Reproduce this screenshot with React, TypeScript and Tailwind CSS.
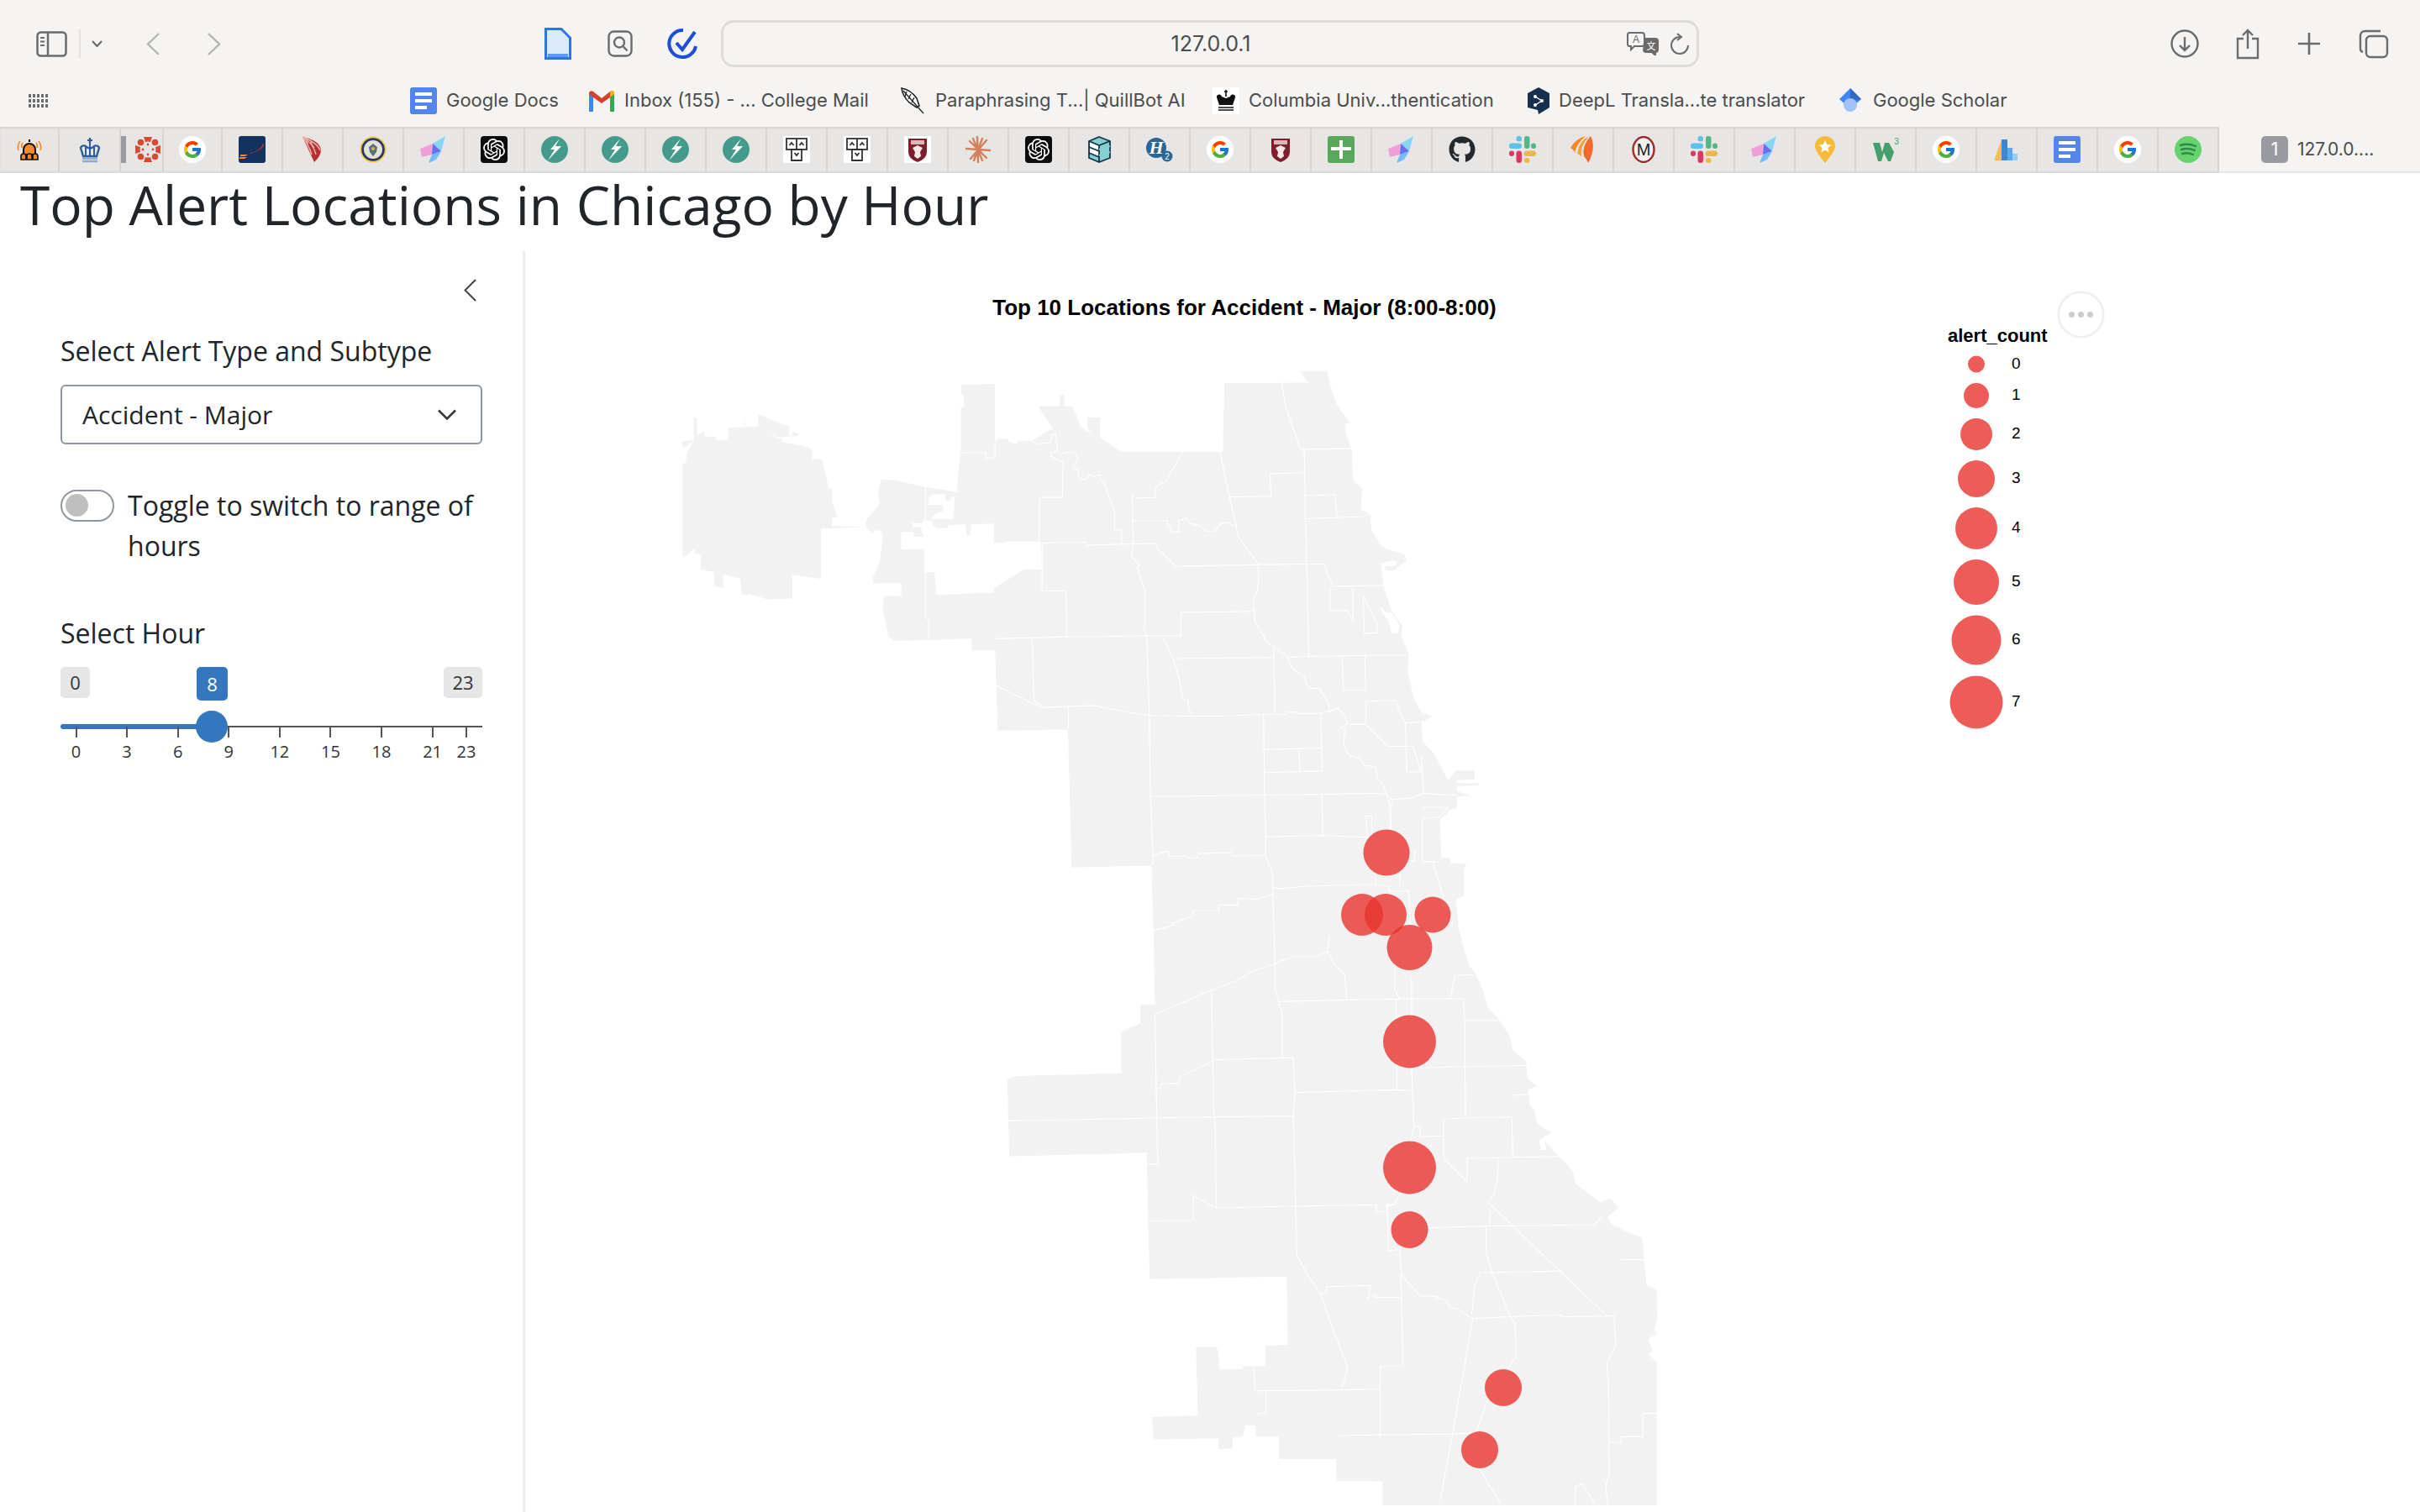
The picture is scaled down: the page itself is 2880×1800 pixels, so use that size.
import React from 'react';
import { FcGoogle } from 'react-icons/fc';
import { FaGithub } from 'react-icons/fa';
import { SiOpenai } from 'react-icons/si';

// ---------- favicons (all 32x32) ----------
const Ico = ({ children }: { children: React.ReactNode }) => (
  <svg viewBox="0 0 32 32" className="w-[32px] h-[32px] shrink-0">{children}</svg>
);

const Bell = () => (
  <Ico>
    <path d="M16 4v3M9 22v-6a7 7 0 0 1 14 0v6z" fill="#f58a2a" stroke="#111" strokeWidth="2" />
    <path d="M6 24a3 3 0 0 1 6 0v4H6zM13 24a3 3 0 0 1 6 0v4h-6zM20 24a3 3 0 0 1 6 0v4h-6z" fill="#f58a2a" stroke="#111" strokeWidth="1.6" />
    <path d="M5 6Q1 11 3 17M27 6q4 5 2 11M8 8q-2 3-1 6M24 8q2 3 1 6" fill="none" stroke="#f58a2a" strokeWidth="1.8" />
  </Ico>
);
const Crown = () => (
  <Ico>
    <path d="M16 2v7M13 5h6" stroke="#2f5d9b" strokeWidth="2.2" />
    <path d="M8 24 5 14a4 4 0 0 1 7-1l4 2 4-2a4 4 0 0 1 7 1l-3 10z" fill="none" stroke="#2f5d9b" strokeWidth="2.4" />
    <path d="M16 9v15M11 13v10M21 13v10" stroke="#2f5d9b" strokeWidth="2" />
    <path d="M7 26.500h18M7 30h18" stroke="#8ea9cc" strokeWidth="2.400" />
  </Ico>
);
const Canvas = () => (
  <Ico>
    <g fill="#d64a36">
      <path d="M11 1h10l-2 6q-3-1-6 0zM11 31h10l-2-6q-3 1-6 0z" />
      <path d="M1 11v10l6-2q-1-3 0-6zM31 11v10l-6-2q1-3 0-6z" />
      <circle cx="7.500" cy="7.500" r="3.800" /><circle cx="24.500" cy="7.500" r="3.800" /><circle cx="7.500" cy="24.500" r="3.800" /><circle cx="24.500" cy="24.500" r="3.800" />
      <circle cx="16" cy="10" r="1.400" /><circle cx="16" cy="22" r="1.400" /><circle cx="10" cy="16" r="1.400" /><circle cx="22" cy="16" r="1.400" />
    </g>
  </Ico>
);
const CanvasTab = () => (
  <div className="w-full h-full flex items-center">
    <span className="w-[6px] h-[32px] bg-[#9a9aa2] shrink-0" />
    <span className="ml-[10px]"><Canvas /></span>
  </div>
);
const Google = () => (
  <span className="w-[32px] h-[32px] rounded-full bg-white flex items-center justify-center shrink-0">
    <FcGoogle className="w-[24px] h-[24px]" />
  </span>
);
const Navy = () => (
  <Ico>
    <rect width="32" height="32" rx="3" fill="#14315f" />
    <path d="M30 8Q26 18 11 21Q22 20 30 12z" fill="#c9302c" />
    <path d="M2 22h9l-3 2H2zM1 25h9l-3 2H1z" fill="#ea8a2c" />
  </Ico>
);
const RedLeaf = () => (
  <Ico>
    <rect x="2" width="28" height="32" fill="#e9e4e2" />
    <path d="M4 1Q24 5 26 16Q26 24 18 31Q12 18 4 1z" fill="#b3312f" />
    <path d="M4 1Q12 12 15 22M4 1Q17 9 20 22M4 1Q22 8 25 17M9 5Q10 12 14 18M14 6Q14 10 18 14" fill="none" stroke="#e8b3ae" strokeWidth="1.400" />
  </Ico>
);
const Seal = () => (
  <Ico>
    <circle cx="16" cy="16" r="15.500" fill="#f0c843" />
    <circle cx="16" cy="16" r="13.800" fill="#27386a" />
    <circle cx="16" cy="16" r="11" fill="#e4e2d4" />
    <path d="M16 9l5 4-1 6-4 5-4-5-1-6z" fill="#5c6f85" />
    <circle cx="16" cy="15" r="2" fill="#d8b547" />
  </Ico>
);
const Prism = () => (
  <Ico>
    <path d="M30 0 15 9l10 9z" fill="#86d6fb" />
    <path d="M0 15 15 9l-1 13-12 3z" fill="#f09fd8" />
    <path d="M25 18 14 22 10 32l9-4z" fill="#75bcfb" />
    <path d="M15 9l10 9-11 4z" fill="#6a6cf0" />
  </Ico>
);
const Openai = () => (
  <span className="w-[32px] h-[32px] rounded-[4px] bg-[#0d0d0d] flex items-center justify-center shrink-0">
    <SiOpenai className="w-[26px] h-[26px] text-white" />
  </span>
);
const Bolt = () => (
  <Ico>
    <circle cx="16" cy="16" r="16" fill="#459a8c" />
    <path d="M22 3 11 16h5L8 29l16-17h-7l5-9z" fill="#fff" />
  </Ico>
);
const Cols = () => (
  <Ico>
    <rect width="32" height="32" fill="#fff" />
    <g fill="none" stroke="#333" strokeWidth="1.800">
      <rect x="4" y="3" width="24" height="13" />
      <path d="M16 3v13M10 16h12v13H10z" />
      <path d="M7.500 11l2.500-3 2.500 3M19.500 11l2.500-3 2.500 3M13.500 20l2.500 3 2.500-3" />
    </g>
  </Ico>
);
const Shield = ({ white = false }: { white?: boolean }) => (
  <Ico>
    {white && <rect width="32" height="32" fill="#fff" />}
    <path d="M5 3h22v16q0 8-11 12Q5 27 5 19z" fill="#7f1d2d" />
    <rect x="8" y="5" width="16" height="5" fill="#d9b8b8" />
    <path d="M16 11l6 3-3 5 1 5-4 3-4-3 1-5-3-5z" fill="#f3e8e8" />
  </Ico>
);
const Star = () => (
  <Ico>
    <g stroke="#d67f5d" strokeWidth="2.400" strokeLinecap="round">
      <path d="M15 1l1 30M2 15l28 2M6 6l20 20M26 5 7 27M10 3l11 26M21 3 11 29" />
    </g>
  </Ico>
);
const Stack = () => (
  <Ico>
    <path d="M16 1 29 6v20l-13 5L4 26V6z" fill="#85cfd0" stroke="#153349" strokeWidth="1.800" />
    <path d="M5 7l11 4v6L5 13zM5 14l11 4v6L5 20z" fill="#fff" />
    <path d="M4 6l12 5 13-5M4 13l12 5M4 20l12 5M16 11v20" fill="none" stroke="#153349" strokeWidth="1.800" />
    <path d="M16 16l13-4M16 23l13-4" stroke="#85cfd0" strokeWidth="2" />
  </Ico>
);
const H2 = () => (
  <Ico>
    <circle cx="12" cy="14" r="12" fill="#2a6595" />
    <text x="12" y="21" textAnchor="middle" fontFamily="Liberation Serif, serif" fontStyle="italic" fontWeight="700" fontSize="22" fill="#fff">H</text>
    <circle cx="25" cy="24" r="6.500" fill="#2a6595" />
    <text x="25" y="28" textAnchor="middle" fontFamily="Liberation Sans, sans-serif" fontSize="10" fill="#fff">2</text>
  </Ico>
);
const Cross = () => (
  <Ico>
    <rect width="32" height="32" rx="3" fill="#5aa85c" />
    <path d="M4 13h24v4H4zM14 5h4v22h-4z" fill="#fff" />
  </Ico>
);
const Github = () => <FaGithub className="w-[32px] h-[32px] text-[#24292f] shrink-0" />;
const Slack = () => (
  <Ico>
    <rect x="18" y="0" width="6.500" height="15" rx="3.200" fill="#53b787" />
    <rect x="26" y="8.500" width="6" height="6.500" rx="3" fill="#53b787" />
    <rect x="0" y="8.500" width="15" height="6.500" rx="3.200" fill="#5fc1ea" />
    <rect x="8.500" y="0" width="6.500" height="6.500" rx="3.200" fill="#5fc1ea" />
    <rect x="8.500" y="17.500" width="6.500" height="14.500" rx="3.200" fill="#d9385f" />
    <rect x="0" y="17.500" width="6" height="6.500" rx="3" fill="#d9385f" />
    <rect x="17.500" y="17.500" width="14.500" height="6.500" rx="3.200" fill="#e9b84a" />
    <rect x="18" y="26" width="6.500" height="6" rx="3" fill="#e9b84a" />
  </Ico>
);
const Wings = () => (
  <Ico>
    <path d="M19 0Q7 3 1 14q4 2 5 6Q9 8 19 0z" fill="#f28a32" />
    <path d="M23 0Q11 6 9 21q4 1 5 5Q12 12 23 0z" fill="#f4a23e" />
    <path d="M25 0Q14 12 17 24q3 3 5 8Q32 14 25 0z" fill="#f26a2a" />
  </Ico>
);
const MIcon = () => (
  <Ico>
    <ellipse cx="16" cy="16" rx="12.500" ry="15" fill="#f4f2f0" stroke="#9c2b26" strokeWidth="2.400" />
    <text x="16" y="23" textAnchor="middle" fontFamily="Liberation Sans, sans-serif" fontSize="20" fill="#222">M</text>
  </Ico>
);
const Pin = () => (
  <Ico>
    <path d="M16 32Q4 18 4 12a12 12 0 0 1 24 0q0 6-12 20z" fill="#f6bb3a" />
    <path d="M16 5l2.200 5 5.300.500-4 3.500 1.200 5.200L16 16.500 11.300 19.200l1.200-5.200-4-3.500 5.300-.5z" fill="#fff" />
  </Ico>
);
const W3 = () => (
  <Ico>
    <path d="M1 8h8l3 11 3-11h5l6 11-4 11h-3l-5-10-3 10h-4z" fill="#46a06e" />
    <text x="29" y="10" textAnchor="middle" fontFamily="Liberation Sans, sans-serif" fontSize="10" fill="#46a06e">3</text>
  </Ico>
);
const Analytics = () => (
  <Ico>
    <path d="M10 4v25H1z" fill="#f4c14e" />
    <rect x="10" y="4" width="7" height="25" fill="#3f86cc" />
    <rect x="17" y="14" width="6" height="15" fill="#5aaaf0" />
    <rect x="23" y="21" width="6" height="8" fill="#8fd0fb" />
  </Ico>
);
const Docs = () => (
  <Ico>
    <rect width="32" height="32" rx="3" fill="#5585ea" />
    <path d="M6 6h20v4H6zM6 14h20v4H6zM6 22h14v4H6z" fill="#fff" />
  </Ico>
);
const Spotify = () => (
  <Ico>
    <circle cx="16" cy="16" r="16" fill="#67d36f" />
    <path d="M7 11q9-3 18 1M8 16q8-2.500 16 1M9 21q7-2 13 1" fill="none" stroke="#2f8a4a" strokeWidth="2.400" strokeLinecap="round" />
  </Ico>
);
const Quill = () => (
  <svg viewBox="0 0 32 32" className="w-[32px] h-[32px] shrink-0">
    <path d="M3 1Q14 3 21 13l3 9-3 2-9-6Q4 10 3 1z" fill="#fff" stroke="#222" strokeWidth="1.600" />
    <path d="M5 4l16 18 8 9M9 5l-2 6M14 8l-3 6M18 12l-3 6" fill="none" stroke="#222" strokeWidth="1.300" />
  </svg>
);
const Gmail = () => (
  <svg viewBox="0 0 32 32" className="w-[32px] h-[32px] shrink-0">
    <path d="M1 29V6l5 3v20z" fill="#4285f4" />
    <path d="M26 29V9l5-3v23z" fill="#34a853" />
    <path d="M1 6q2-3 5-1l10 8L26 5q3-2 5 1v2l-5 4-10 7-10-7-5-4z" fill="#d6402f" />
    <path d="M26 5q3-2 5 1v2l-5 4z" fill="#f4b400" />
  </svg>
);
const ColCrown = () => (
  <svg viewBox="0 0 32 32" className="w-[32px] h-[32px] shrink-0">
    <rect width="32" height="32" fill="#fff" />
    <path d="M16 3v8M14 5h4" stroke="#111" strokeWidth="1.600" />
    <path d="M8 21 5 12a3 3 0 0 1 6-1l5 2 5-2a3 3 0 0 1 6 1l-3 9z" fill="#111" />
    <path d="M7 24h18M7 27h18" stroke="#111" strokeWidth="1.600" />
  </svg>
);
const Deepl = () => (
  <svg viewBox="3 0 26 32" className="w-[26px] h-[32px] shrink-0">
    <path d="M16 0 29 7v17l-13 8-1-5-12-3V7z" fill="#17304d" />
    <circle cx="12" cy="11" r="2" fill="#fff" /><circle cx="12" cy="21" r="2" fill="#fff" /><circle cx="20" cy="16" r="2" fill="#fff" />
    <path d="M12 11l8 5-8 5" fill="none" stroke="#fff" strokeWidth="1.400" />
  </svg>
);
const Scholar = () => (
  <svg viewBox="0 0 32 32" className="w-[32px] h-[32px] shrink-0">
    <path d="M16 1 29 14 16 26 3 14z" fill="#4285f4" />
    <path d="M16 1 29 14l-13 4z" fill="#356ac3" />
    <circle cx="16" cy="21" r="8" fill="#a0c3ff" />
  </svg>
);

// width of each tab, in order, with its favicon
const tabs: [number, React.ReactNode][] = [
  [71, <Bell />], [73, <Crown />], [51, <CanvasTab />], [70, <Google />], [72, <Navy />], [72, <RedLeaf />], [72, <Seal />],
  [72, <Prism />], [72, <Openai />], [72, <Bolt />], [72, <Bolt />], [72, <Bolt />], [72, <Bolt />], [72, <Cols />],
  [72, <Cols />], [72, <Shield white />], [72, <Star />], [72, <Openai />], [72, <Stack />], [72, <H2 />], [72, <Google />],
  [72, <Shield />], [72, <Cross />], [72, <Prism />], [72, <Github />], [72, <Slack />], [72, <Wings />], [72, <MIcon />],
  [72, <Slack />], [72, <Prism />], [72, <Pin />], [72, <W3 />], [72, <Google />], [72, <Analytics />], [72, <Docs />],
  [72, <Google />], [72, <Spotify />],
];

const bookmarks: [number, React.ReactNode, string][] = [
  [212, <Docs />, 'Google Docs'],
  [370, <Gmail />, 'Inbox (155) - ... College Mail'],
  [373, <Quill />, 'Paraphrasing T...| QuillBot AI'],
  [375, <ColCrown />, 'Columbia Univ...thentication'],
  [368, <Deepl />, 'DeepL Transla...te translator'],
  [240, <Scholar />, 'Google Scholar'],
];

// ---------- map, traced points ----------
const topOutline =
  'M82,298 82,278 103,276 103,216 109,216 109,262 122,252 124,266 145,266 145,276 167,276 167,243 197,241 197,212 199,240 223,240 223,208 240,216 272,236 281,238 281,262 287,262 288,252 298,258 298,264 262,268 240,252 260,270 267,272 267,280 310,292 324,300 324,326 342,326 355,405 361,406 361,440 371,480 361,482 361,504 425,507 424,490 450,445 447,415 452,380 475,382 535,400 593,414 598,340 601,310 601,190 607,187 607,153 602,153 602,128 665,125 665,278 672,272 688,272 690,278 697,284 706,284 708,278 733,278 773,244 745,185 786,185 786,155 794,155 794,185 810,185 825,240 846,258 838,246 838,214 861,215 861,268 900,307 1090,307 1093,124 1250,122 1234,92 1285,92 1290,125 1302,180 1327,230 1318,232 1320,260 1331,300 1332,380 1350,405 1348,460 1366,475 1367,515 1385,555 1398,568 1428,578 1434,597 1420,610 1410,624 1395,622 1392,612 1412,610 1416,600 1410,596 1385,605 1390,665 1405,730 1425,770 1423,800 1437,845 1435,890 1440,925 1448,970 1460,1000 1480,1012 1461,1030 1463,1080 1485,1112 1510,1182 1525,1157 1560,1157 1560,1180 1527,1182 1527,1190 1568,1190 1568,1197 1528,1198 1527,1212 1555,1224 1527,1226 1527,1257 1512,1262 1510,1270 1495,1288 1498,1390 1513,1390 1515,1403 1545,1405 1540,1420 1540,1490 1525,1500 1530,1570 960,1570 957,1410 808,1415 801,1048 670,1050 665,835 622,836 622,805 478,811 466,798 455,720 458,692 490,690 490,656 438,658 437,640 450,600 456,530 450,515 440,518 435,525 425,507 340,512 340,645 287,635 287,698 240,700 205,685 203,690 192,688 190,645 158,633 158,670 141,664 141,628 116,620 116,580 105,578 105,562 88,585 82,585 82,340 88,335 90,310 103,278 Z M541,430 548,420 572,420 572,436 582,436 583,427 590,427 587,486 548,486 548,477 560,470 568,465 568,448 540,448 Z M511,497 530,497 530,490 547,490 550,503 556,510 577,510 577,503 610,500 612,530 619,530 620,500 663,498 663,550 683,549 686,546 750,546 752,620 720,620 663,670 663,682 555,688 552,627 533,627 533,566 490,566 490,520 513,520 513,533 533,533 528,520 528,507 511,507 Z M1385,720 1395,735 1405,735 1420,770 1417,790 1405,790 1400,760 1385,730 Z';

const topLines = [
  '535,400 535,490',
  '601,310 648,308 650,323 665,323 665,278',
  '733,278 745,285 768,282 772,260 778,258 782,305 770,308 770,318 792,335 791,428 748,428 747,546',
  '782,305 790,312 800,308 815,310 820,325 812,342 812,352 822,358 820,372 828,380 835,380 840,368 850,372 860,368 863,385 868,388 888,465 888,515 901,515 901,553',
  '1015,308 990,368 985,385 964,400 964,428 928,430 921,420 922,490 923,550 920,585 935,610 930,615 945,680 945,765 942,775 948,795 953,1010 955,1225 958,1320 960,1390 958,1410',
  '748,550 835,548 838,556 901,553 965,551 968,565 1002,612 1155,608 1245,606 1280,606 1287,640 1297,665 1390,663',
  '922,490 987,490 988,505 993,507 993,520 1008,520 1008,490 1020,484 1030,497 1045,503 1060,518 1075,518 1085,500 1097,495 1115,505',
  '1085,307 1102,425 1115,505 1118,530 1155,605 1157,640 1155,675 1147,700 1150,760 1165,795 1172,815 1185,825 1187,1005',
  '1102,427 1180,425 1178,365 1243,362',
  '1200,122 1208,190 1234,298 1242,300 1243,362 1244,485 1247,606 1250,852',
  '1234,300 1331,298',
  '1244,423 1300,421 1303,482',
  '1244,485 1350,480 1366,473',
  '753,550 753,678 797,678 799,800',
  '663,805 800,800 948,797 1012,797 1012,735 1147,732',
  '535,627 535,750 541,752 541,808',
  '734,803 738,970 755,988 850,983 900,998 953,1010 1070,1012 1165,1007 1207,1007 1209,1001 1230,1001 1232,1005 1275,1004 1295,995',
  '667,930 750,988',
  '802,985 802,1048',
  '978,800 997,858 1185,855',
  '997,858 1010,918 1015,965 1025,970 1027,995 1035,1010',
  '1185,825 1197,842 1205,845 1210,855 1250,852 1435,848',
  '1210,855 1220,885 1243,905 1245,925 1255,938 1270,938 1285,970 1290,1000 1305,990 1318,1010 1322,1033 1357,1033 1357,972 1412,970 1430,1030 1465,1025',
  '1313,852 1315,942 1357,942 1355,850',
  '1322,1033 1310,1042 1318,1050 1315,1085 1325,1115 1345,1125 1355,1143 1375,1147 1378,1175 1390,1195 1400,1240 1405,1320',
  '1357,1033 1398,1092 1445,1092 1460,1160 1433,1160 1431,1030',
  '1166,1007 1168,1222 1170,1330 1170,1385 1183,1430 1185,1568',
  '1273,1004 1275,1158 1168,1162',
  '1168,1100 1275,1097',
  '1232,1098 1234,1160',
  '955,1226 1168,1222 1185,1222 1360,1218 1380,1218 1398,1222 1405,1235 1420,1232 1445,1230 1460,1218 1527,1222',
  '1460,1118 1465,1220',
  '1275,1222 1277,1330',
  '1170,1333 1277,1330 1360,1335 1357,1278 1368,1278 1368,1330',
  '1405,1240 1402,1320 1420,1395 1448,1398 1448,1370',
  '1462,1255 1510,1255 1495,1280 1462,1285 1462,1400 1495,1400',
  '958,1385 988,1370 990,1385 1020,1385 1025,1390 1042,1390 1045,1378 1105,1375 1108,1385 1170,1383',
  '1185,1468 1195,1472 1245,1465 1375,1460 1400,1465 1400,1478 1437,1478 1440,1568',
  '1375,1440 1375,1460',
  '1420,1395 1420,1465',
  '1482,1400 1505,1510 1520,1568',
  '1185,1485 1155,1500 1120,1498 1118,1515 1083,1515 1082,1530 1035,1530 1033,1545 990,1568',
  '1290,668 1290,730 1322,730 1333,755 1332,668',
  '1352,690 1378,768 1377,790 1354,790 1352,690',
];

const bottomOutline =
  'M475,-2 1105,-2 1110,20 1120,70 1130,110 1140,125 1160,180 1168,220 1190,250 1215,300 1220,335 1248,365 1250,410 1270,430 1252,440 1255,480 1265,495 1270,530 1300,555 1285,565 1275,575 1278,600 1290,600 1285,575 1310,610 1330,635 1345,660 1350,690 1400,740 1422,730 1440,755 1415,780 1425,800 1488,835 1497,960 1518,972 1520,1040 1513,1085 1520,1090 1500,1105 1510,1135 1500,1145 1518,1165 1518,1548 950,1548 950,1484 855,1483 853,1425 735,1425 735,1365 687,1365 687,1335 666,1335 660,1365 640,1367 638,1398 610,1398 610,1370 475,1372 472,1313 567,1308 563,1125 605,1125 610,1140 612,1185 660,1185 660,1177 707,1177 707,1122 754,1120 751,938 467,945 461,608 176,617 172,413 190,403 409,396 408,285 448,263 448,212 478,212 Z';

const bottomLines = [
  '725,0 727,170 735,205 875,200 1010,197 1118,197',
  '840,30 835,70 850,105 872,135 875,198',
  '475,15 520,0',
  '478,238 595,175 645,150 680,125 765,85 810,85 838,70',
  '595,175 598,360 600,512',
  '735,205 742,240 742,355 598,360',
  '742,355 765,355 768,447 765,510 770,750 772,880 795,935 822,985 850,1090 878,1180 865,1240',
  '598,362 580,375 530,405 528,422 492,424 490,435 480,435',
  '478,238 482,515 484,637 462,638',
  '174,523 482,515 600,512 767,510',
  '603,512 605,755 770,750 937,747 938,765 958,765 960,745 975,745 980,730',
  '605,755 558,722 558,788 463,790',
  '768,447 980,440 1012,442',
  '975,0 975,175 985,197 978,200 980,440',
  '1010,140 1010,197 1010,380 1012,442 1015,538 1028,538 1028,565 1077,563',
  '1015,540 1010,565 1005,650 985,720 975,745 960,750 962,870 985,865',
  '1118,197 1120,255 1122,515',
  '1100,135 1090,197',
  '1100,135 1138,133',
  '1120,255 1190,255',
  '1010,382 1120,378 1248,375',
  '1076,518 1122,515 1218,512 1220,620 1125,623 1125,685 1077,625 1076,518',
  '1218,455 1252,452',
  '1220,620 1315,618',
  '1190,620 1188,680 1182,715 1170,740',
  '1170,742 1415,1043',
  '1172,762 1172,803 1045,808',
  '1172,803 1222,803 1385,800 1405,780',
  '1165,805 1165,875 1178,930 1215,1045 1225,1065 1227,1150 1213,1178 1165,1275 1145,1350',
  '985,865 990,935 1028,990 1058,990 1082,1003 1090,1020 1107,1025 1135,1050 1215,1045 1320,1040 1320,1045 1430,1043',
  '1152,928 1322,923',
  '1152,928 1140,965 1135,1040',
  '988,935 992,1175 945,1178 945,1360 1095,1358 1145,1355 1150,1450 1195,1545',
  '833,965 925,962 920,995 935,985 935,993 988,993',
  '833,965 833,983 822,985',
  '1137,1050 1095,1358 1068,1545',
  '683,1177 685,1243 865,1240 945,1238',
  '708,1243 708,1300 687,1305',
  '853,1362 945,1360',
  '1430,1043 1433,1120 1415,1170 1418,1215 1420,1460 1412,1500 1418,1545',
  '1518,1303 1490,1303 1490,1365 1445,1365 1445,1380 1420,1380',
  '1350,1545 1350,1498 1363,1490 1390,1545',
  '1445,893 1492,893',
];

const bubbles = [
  [1650, 1014, 27.5], [1621, 1088, 25], [1649, 1088, 25], [1705, 1088, 21.5], [1677.5, 1127, 27],
  [1677.5, 1239, 31.5], [1677.5, 1389, 31.5], [1677.5, 1463, 22], [1789, 1651, 22], [1761, 1725, 22],
];

const legend = [
  [432.5, 10], [470, 15], [516, 19], [569, 22], [628, 25], [692, 27], [761, 29.5], [835, 31.5],
];

function ChicagoChart() {
  return (
    <svg viewBox="625 298 2255 1502" className="block w-[2255px] h-[1502px]">
      <text x="1481" y="374" textAnchor="middle" fontFamily="Liberation Sans, sans-serif" fontWeight="700" fontSize="26" fill="#000">
        Top 10 Locations for Accident - Major (8:00-8:00)
      </text>
      <g transform="translate(760 400) scale(0.6378 0.4464)">
        <path d={topOutline} fill="#f2f2f2" fillRule="evenodd" />
        {topLines.map((p, i) => (
          <polyline key={i} points={p} fill="none" stroke="#fff" strokeOpacity="0.9" strokeWidth="1.200" vectorEffect="non-scaling-stroke" />
        ))}
      </g>
      <g transform="translate(1100 1100) scale(0.5741 0.4464)">
        <path d={bottomOutline} fill="#f2f2f2" />
        {bottomLines.map((p, i) => (
          <polyline key={i} points={p} fill="none" stroke="#fff" strokeOpacity="0.9" strokeWidth="1.200" vectorEffect="non-scaling-stroke" />
        ))}
      </g>
      {bubbles.map(([x, y, r], i) => (
        <circle key={i} cx={x} cy={y} r={r} fill="#e9332e" fillOpacity="0.8" />
      ))}
      <text x="2318" y="406" fontFamily="Liberation Sans, sans-serif" fontWeight="700" fontSize="22" fill="#000">alert_count</text>
      {legend.map(([y, r], i) => (
        <g key={i}>
          <circle cx="2352" cy={y} r={r} fill="#e9332e" fillOpacity="0.8" />
          <text x="2394" y={y + 5} fontFamily="Liberation Sans, sans-serif" fontSize="19" fill="#000">{i}</text>
        </g>
      ))}
    </svg>
  );
}

const ticks = [0, 3, 6, 9, 12, 15, 18, 21, 23];

function HourSlider() {
  return (
    <div className="relative h-[120px] w-[502px] mt-[16px] text-[#333]">
      <span className="absolute left-0 top-0 w-[35px] h-[37px] rounded-[5px] bg-[#e6e6e6] flex items-center justify-center text-[22px]">0</span>
      <span className="absolute left-[162px] top-0 w-[37px] h-[40px] rounded-[5px] bg-[#3477bf] text-white flex items-center justify-center text-[22px]">8</span>
      <span className="absolute right-0 top-0 w-[46px] h-[37px] rounded-[5px] bg-[#e6e6e6] flex items-center justify-center text-[22px]">23</span>
      <div className="absolute left-0 right-0 top-[70px] h-[2px] bg-[#555]" />
      <div className="absolute left-0 w-[170px] top-[68px] h-[6px] rounded-l-full bg-[#3477bf]" />
      {ticks.map((t) => {
        const left = 18.5 + (t * 464.5) / 23;
        return (
          <div key={t} className="absolute top-[71px] w-0 flex flex-col items-center" style={{ left }}>
            <div className="w-[2px] h-[13px] bg-[#555] shrink-0" />
            <span className="text-[20px] leading-[27px] mt-[3px]">{t}</span>
          </div>
        );
      })}
      <div className="absolute left-[161px] top-[52px] w-[38px] h-[38px] rounded-full bg-[#3477bf]" />
    </div>
  );
}

export default function App() {
  return (
    <div className="w-[2880px] h-[1800px] overflow-hidden bg-white flex flex-col font-['Open_Sans',sans-serif]">
      <div className="h-[151px] shrink-0 bg-[#f5f4f2] font-['Inter',sans-serif]">
        <div className="h-[104px] flex items-center">
          <svg viewBox="0 0 37 31" className="w-[37px] h-[31px] ml-[43px] shrink-0" fill="none" stroke="#6b6b6b" strokeWidth="2.500">
            <rect x="1.500" y="1.500" width="34" height="28" rx="4" />
            <path d="M14 1.500v28" />
            <path d="M5 8h5M5 12.500h5M5 17h5" strokeWidth="2" />
          </svg>
          <div className="w-[2px] h-[34px] bg-[#e2e1df] ml-[14px]" />
          <svg viewBox="0 0 13 8" className="w-[13px] h-[8px] ml-[13px] shrink-0" fill="none" stroke="#6b6b6b" strokeWidth="2.200"><path d="M1 1l5.500 6L12 1" /></svg>
          <svg viewBox="0 0 19 29" className="w-[19px] h-[29px] ml-[51px] shrink-0" fill="none" stroke="#b5b5b3" strokeWidth="2.400"><path d="M16 2 3 14.500 16 27" /></svg>
          <svg viewBox="0 0 19 29" className="w-[19px] h-[29px] ml-[53px] shrink-0" fill="none" stroke="#b5b5b3" strokeWidth="2.400"><path d="M3 2l13 12.500L3 27" /></svg>
          <svg viewBox="0 0 32 38" className="w-[32px] h-[38px] ml-[384px] shrink-0">
            <path d="M1.500 1.500H20L30.500 12v24.500h-29z" fill="#dbe9fd" stroke="#2d74ea" strokeWidth="3" />
            <path d="M4 31h24v4H4z" fill="#5a9bf5" />
          </svg>
          <svg viewBox="0 0 30 32" className="w-[30px] h-[32px] ml-[43px] shrink-0" fill="none" stroke="#6b6b6b" strokeWidth="2.400">
            <rect x="1.500" y="1.500" width="27" height="29" rx="6" />
            <circle cx="14" cy="14.500" r="6" />
            <path d="M18.500 19l5 5.500" />
          </svg>
          <svg viewBox="0 0 37 38" className="w-[37px] h-[38px] ml-[41px] shrink-0" fill="none" stroke="#1d4ed8" strokeWidth="4">
            <path d="M19 3A16 16 0 1 0 34 22" />
            <path d="M11 18l7 8L33 5" />
          </svg>
          <div className="relative w-[1164px] h-[56px] ml-[27px] rounded-[15px] border-[3px] border-[#dcdbd9] flex items-center justify-center shrink-0">
            <span className="text-[25px] text-[#4c4c4c] pl-[2px] pt-[1px]">127.0.0.1</span>
            <svg viewBox="0 0 38 28" className="absolute right-[45px] top-[11px] w-[38px] h-[28px]" fill="none" stroke="#6b6b6b" strokeWidth="2">
              <path d="M3 1h15q3 0 3 3v10q0 3-3 3H9l-4 4v-4H3q-2 0-2-3V4q0-3 2-3z" />
              <text x="11" y="13" textAnchor="middle" fontFamily="Liberation Sans, sans-serif" fontSize="12" fill="#6b6b6b" stroke="none">A</text>
              <path d="M23 8h11q3 0 3 3v10q0 3-3 3v4l-4-4h-7q-3 0-3-3z" fill="#6b6b6b" />
              <text x="29" y="21" textAnchor="middle" fontFamily="Noto Sans CJK JP, sans-serif" fontSize="11" fill="#fff" stroke="none">文</text>
            </svg>
            <svg viewBox="0 0 24 27" className="absolute right-[8px] top-[12px] w-[24px] h-[27px]" fill="none" stroke="#6b6b6b" strokeWidth="2">
              <path d="M12 5a10 10 0 1 0 10 10" />
              <path d="M9 1l5 4-5 4" />
            </svg>
          </div>
          <svg viewBox="0 0 34 34" className="w-[34px] h-[34px] ml-[561px] shrink-0" fill="none" stroke="#6b6b6b" strokeWidth="2.400">
            <circle cx="17" cy="17" r="15.500" />
            <path d="M17 9v16M11 19l6 6 6-6" />
          </svg>
          <svg viewBox="0 0 28 37" className="w-[28px] h-[37px] ml-[44px] shrink-0" fill="none" stroke="#6b6b6b" strokeWidth="2.400">
            <path d="M9 12H2v23h24V12h-7M14 24V2M8 8l6-6 6 6" />
          </svg>
          <svg viewBox="0 0 28 28" className="w-[28px] h-[28px] ml-[45px] shrink-0" fill="none" stroke="#6b6b6b" strokeWidth="2.600"><path d="M14 1v26M1 14h26" /></svg>
          <svg viewBox="0 0 36 35" className="w-[36px] h-[35px] ml-[45px] shrink-0" fill="none" stroke="#6b6b6b" strokeWidth="2.400">
            <rect x="9" y="8" width="25" height="25" rx="5" />
            <path d="M26 2H8Q2 2 2 8v15q0 3 3 4" />
          </svg>
        </div>
        <div className="h-[47px] flex items-start -mt-[1px]">
          <div className="w-[488px] shrink-0 pl-[34px] pt-[9px]">
            <div className="grid grid-cols-5 gap-x-[2px] gap-y-[2px] w-[23px]">
              {Array.from({ length: 15 }).map((_, i) => (
                <span key={i} className="w-[3px] h-[4px] bg-[#6b6b6b]" />
              ))}
            </div>
          </div>
          {bookmarks.map(([w, icon, label]) => (
            <div key={label} className="flex items-center gap-[11px] shrink-0" style={{ width: w }}>
              {icon}
              <span className="text-[22px] text-[#4c4c4c] whitespace-nowrap">{label}</span>
            </div>
          ))}
        </div>
      </div>

      <div className="h-[55px] shrink-0 flex bg-[#f5f4f2] font-['Inter',sans-serif] relative">
        <div className="flex h-full w-[2641px] bg-[#e7e6e4] shadow-[inset_0_2px_2px_#d4d3d1] border-b-[2px] border-[#dcdbd9]">
          {tabs.map(([w, icon], i) => (
            <div key={i} className="h-full flex items-center justify-center border-r-[2px] border-[#d6d5d3] shrink-0" style={{ width: w }}>
              {icon}
            </div>
          ))}
        </div>
        <div className="flex-1 flex items-center pl-[50px] gap-[11px] border-b-[2px] border-[#e7e6e4]">
          <span className="w-[32px] h-[32px] rounded-[5px] bg-[#9a9aa2] text-white text-[22px] flex items-center justify-center">1</span>
          <span className="text-[21px] text-[#4c4c4c]">127.0.0....</span>
        </div>
      </div>

      <h2 className="text-[64px] leading-[1.2] pl-[24px] mb-[16px] text-[#212529] shrink-0 font-normal">Top Alert Locations in Chicago by Hour</h2>

      <div className="flex flex-1 min-h-0">
        <aside className="relative w-[625px] shrink-0 border-r-[3px] border-[#ececec] pt-[95px] pl-[72px] pr-[48px] text-[32px] leading-[48px] text-[#212529]">
          <svg viewBox="0 0 15 27" className="absolute left-[552px] top-[33px] w-[15px] h-[27px]" fill="none" stroke="#444" strokeWidth="2"><path d="M14 1 1.500 13.500 14 26" /></svg>
          <div className="mb-[16px]">Select Alert Type and Subtype</div>
          <div className="w-[502px] h-[71px] rounded-[6px] border-[2px] border-[#8f96a0] flex items-center justify-between pl-[24px] pr-[29px]">
            <span className="text-[30px] pt-[2px]">Accident - Major</span>
            <svg viewBox="0 0 22 13" className="w-[22px] h-[13px]" fill="none" stroke="#343a40" strokeWidth="2.600"><path d="M1 1.500l10 10 10-10" /></svg>
          </div>
          <div className="flex mt-[49px] w-[502px]">
            <div className="w-[64px] h-[38px] mt-[5px] rounded-full border-[2px] border-[#8f96a0] flex items-center pl-[4px] shrink-0">
              <span className="w-[27px] h-[27px] rounded-full bg-[#bfbfbf]" />
            </div>
            <div className="ml-[16px] w-[440px]">Toggle to switch to range of hours</div>
          </div>
          <div className="mt-[56px]">Select Hour</div>
          <HourSlider />
        </aside>
        <main className="relative flex-1">
          <ChicagoChart />
          <div className="absolute left-[1824px] top-[48px] w-[55px] h-[55px] rounded-full bg-white border-[2px] border-[#eeeeee] shadow-[0_0_3px_#eeeeee] flex items-center justify-center gap-[4px]">
            <span className="w-[7px] h-[7px] rounded-full bg-[#cccccc]" />
            <span className="w-[7px] h-[7px] rounded-full bg-[#cccccc]" />
            <span className="w-[7px] h-[7px] rounded-full bg-[#cccccc]" />
          </div>
        </main>
      </div>
    </div>
  );
}
